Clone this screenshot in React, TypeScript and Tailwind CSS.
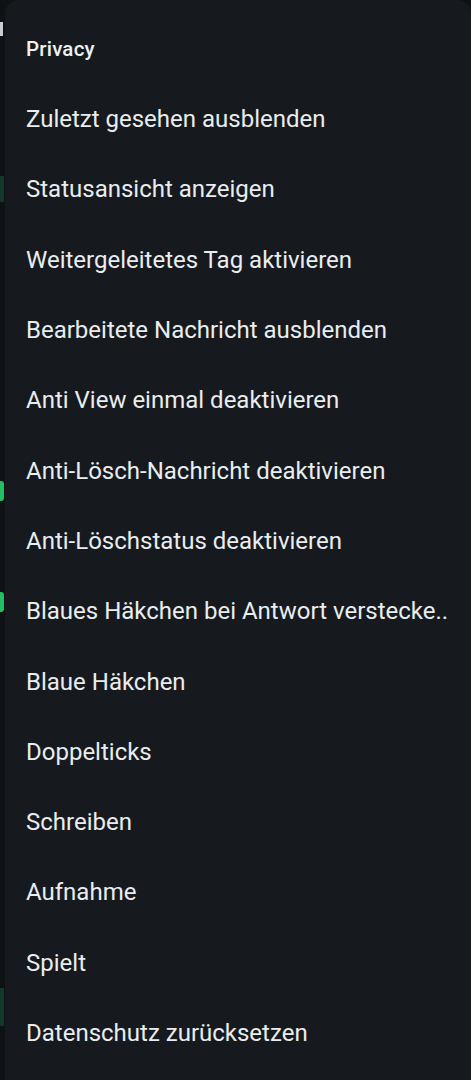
import React from "react";

const items = [
  "Zuletzt gesehen ausblenden",
  "Statusansicht anzeigen",
  "Weitergeleitetes Tag aktivieren",
  "Bearbeitete Nachricht ausblenden",
  "Anti View einmal deaktivieren",
  "Anti-Lösch-Nachricht deaktivieren",
  "Anti-Löschstatus deaktivieren",
  "Blaues Häkchen bei Antwort verstecke..",
  "Blaue Häkchen",
  "Doppelticks",
  "Schreiben",
  "Aufnahme",
  "Spielt",
  "Datenschutz zurücksetzen",
];

export default function App() {
  return (
    <div
      className="flex w-[471px] h-[1080px] overflow-hidden bg-[#0e1214]"
      style={{ fontFamily: "Roboto, 'Noto Sans', sans-serif" }}
    >
      {/* underlying content peeking on the left */}
      <div className="w-[5px] shrink-0 flex flex-col">
        <div className="mt-[22px] w-[3px] h-[14px] bg-[#c9cdd0]" />
        <div className="mt-[140px] w-[4px] h-[26px] bg-[#15372a]" />
        <div className="mt-[279px] w-[4px] h-[20px] rounded-r-[3px] bg-[#21c063]" />
        <div className="mt-[91px] w-[4px] h-[20px] rounded-r-[3px] bg-[#21c063]" />
        <div className="mt-[376px] w-[4px] h-[38px] bg-[#15372a]" />
      </div>

      <div className="flex-1 h-full rounded-t-[14px] bg-[#161a1e] pt-[37px] flex flex-col">
        <div className="pl-[21px] h-[24px] flex items-center text-[20.5px] font-medium text-[#eef1f2] tracking-[0.2px]">
          Privacy
        </div>
        <div className="mt-[23px] flex flex-col">
          {items.map((t) => (
            <div
              key={t}
              className="h-[70.3px] flex items-center pl-[21px] text-[24px] text-[#e9edef] whitespace-nowrap"
            >
              {t}
            </div>
          ))}
        </div>
      </div>
    </div>
  );
}
